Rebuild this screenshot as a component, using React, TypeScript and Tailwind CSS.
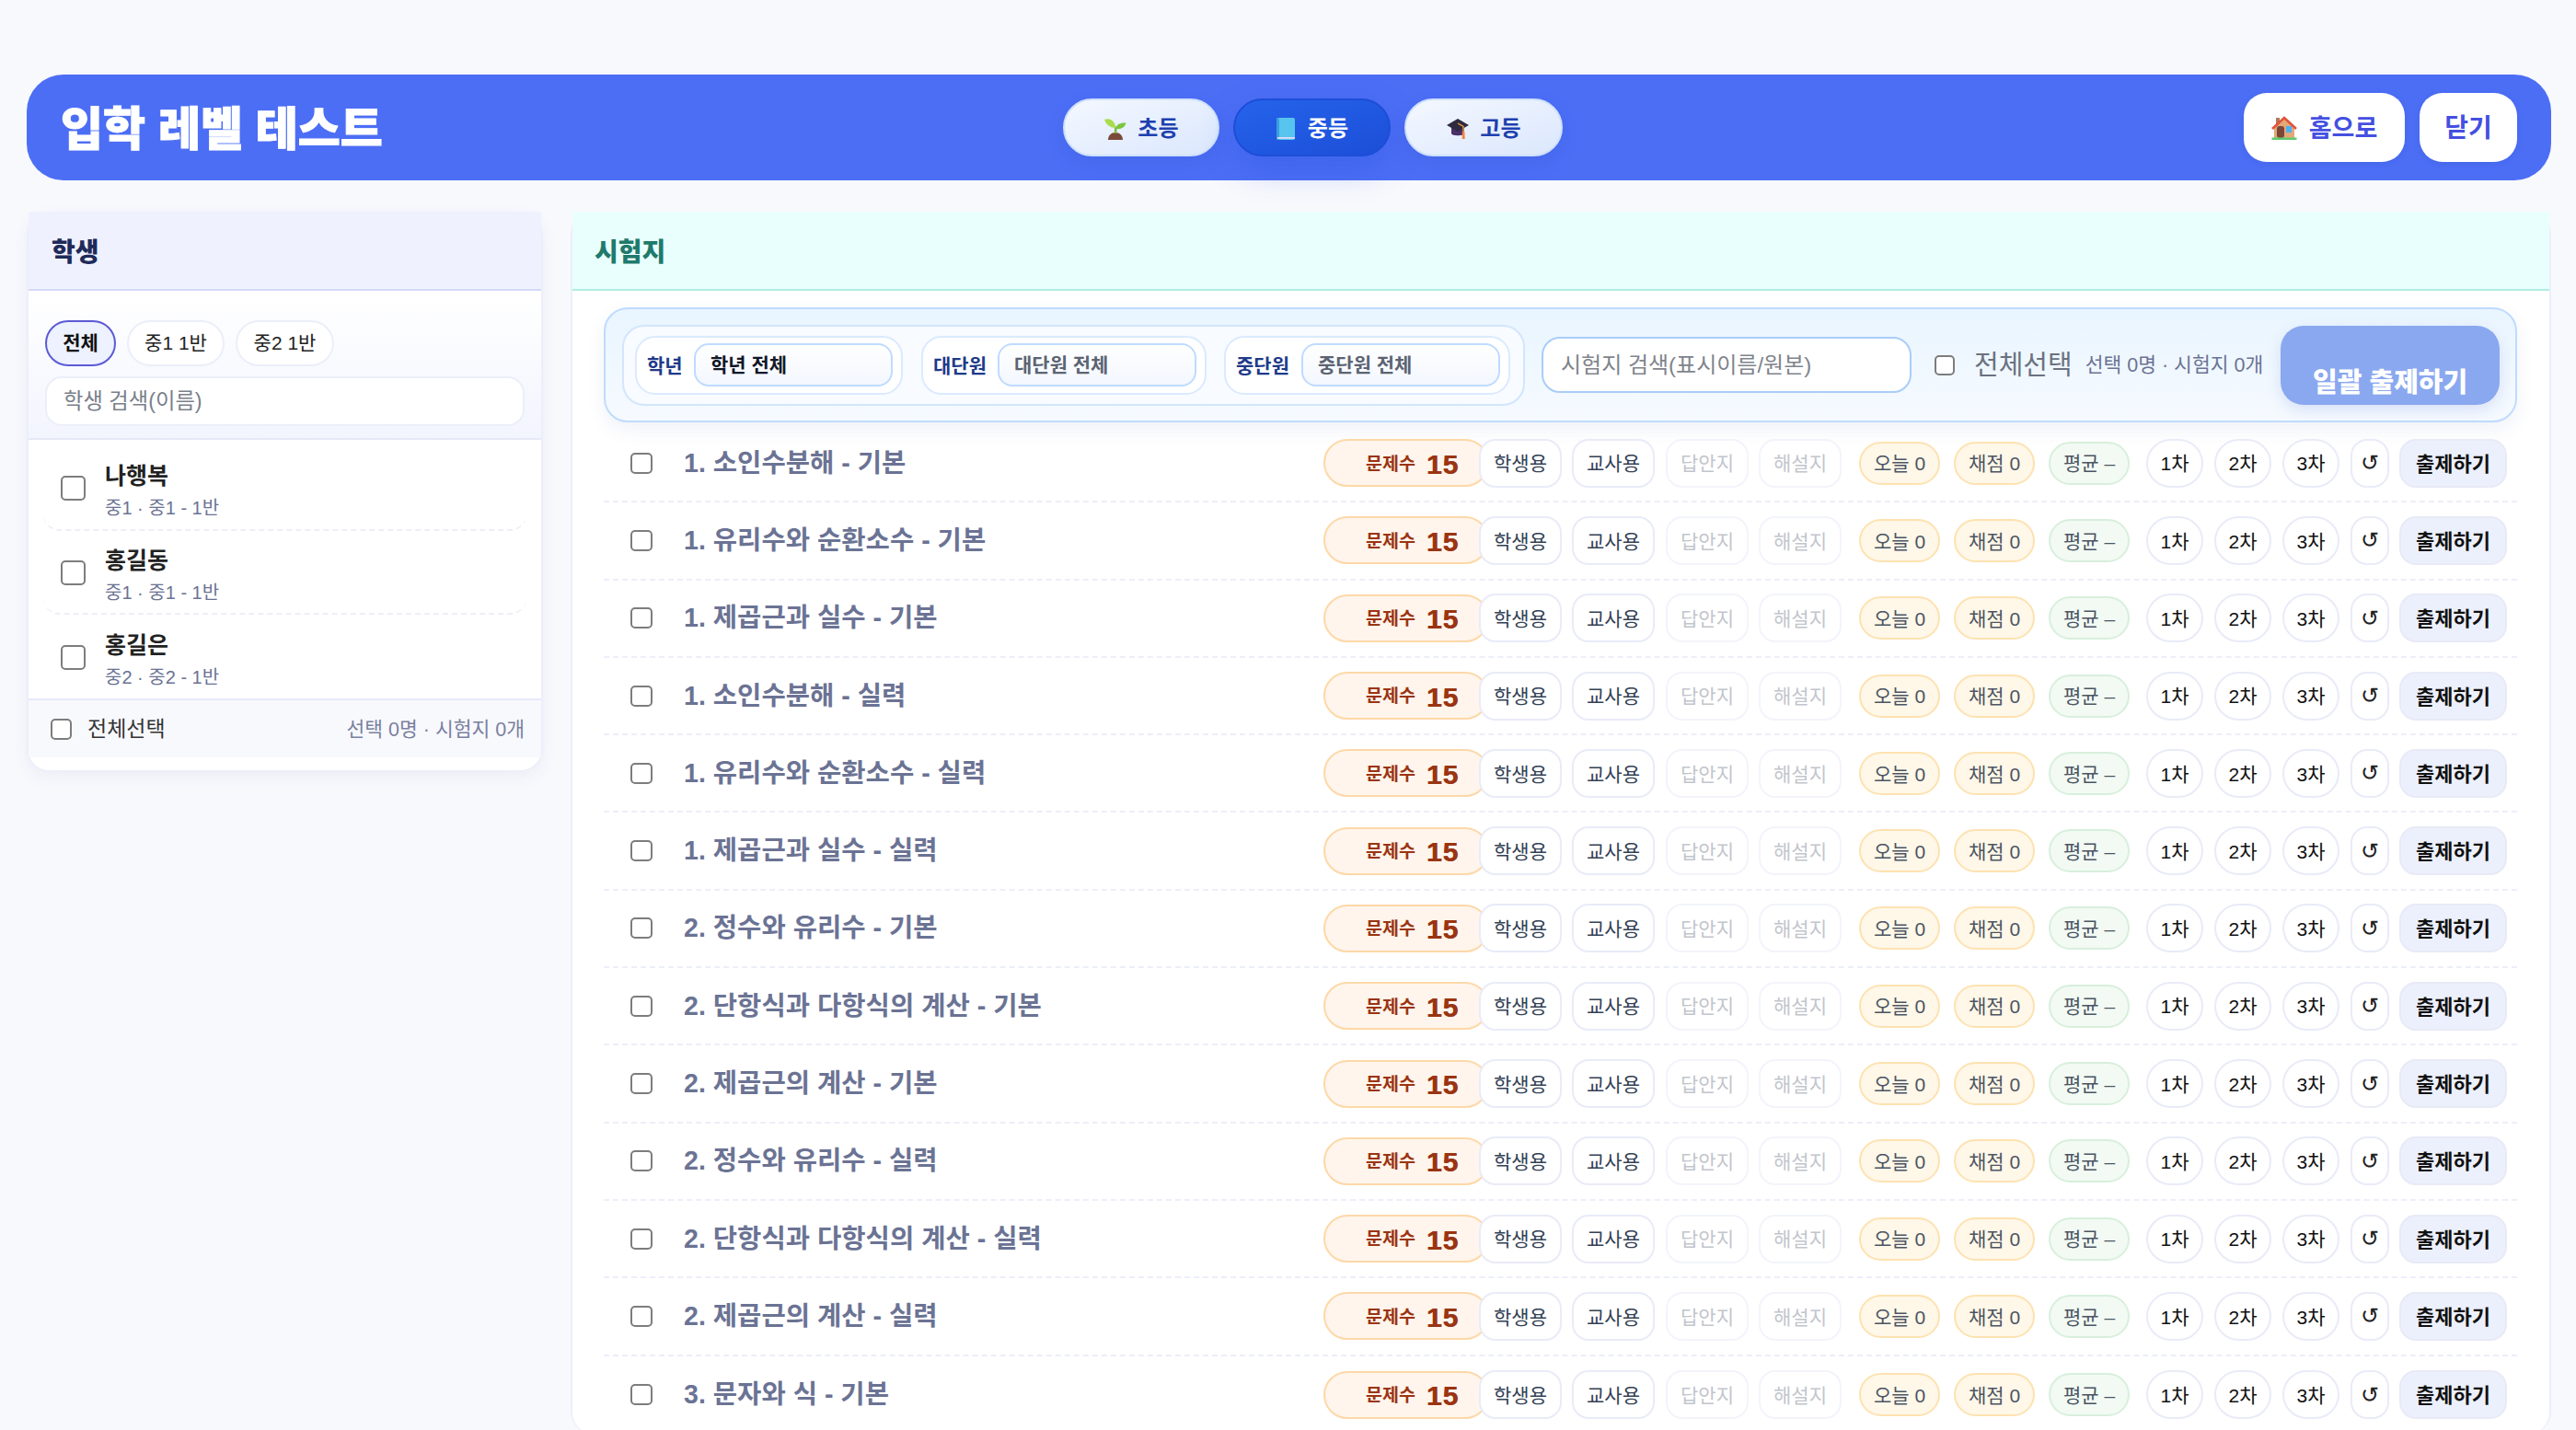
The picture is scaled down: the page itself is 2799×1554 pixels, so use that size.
import React from "react";

const F = "font-['Liberation_Sans','Noto_Sans_CJK_KR',sans-serif]";

const Sprout = () => (
  <svg viewBox="0 0 24 24" className="w-[24px] h-[24px] mt-[2px]">
    <path d="M4 24c0-5 3.500-8 8-8s8 3 8 8z" fill="#7a4a3a" />
    <path d="M11 17V9.500h2.400V17z" fill="#74b843" />
    <path d="M12 11C7 11 2 8 0 2c5-2 11 0 12.500 9z" fill="#a9dc4c" />
    <path d="M12.500 12c0-5 5-7 11-6.500-1 5-6 7.500-11 6.500z" fill="#7cc63e" />
  </svg>
);
const Book = () => (
  <svg viewBox="0 0 20 24" className="w-[20px] h-[24px] mt-[2px]">
    <rect x="0" y="0" width="20" height="24" rx="2" fill="#56c4ef" />
    <rect x="0" y="0" width="3" height="24" rx="1.500" fill="#3aa0dd" />
    <rect x="1" y="21" width="19" height="1.800" fill="#e3d9f5" />
  </svg>
);
const Cap = () => (
  <svg viewBox="0 0 24 22" className="w-[24px] h-[22px] mt-[3px]">
    <path d="M5 9v7c0 3 14 3 14 0V9z" fill="#4a2f6b" />
    <path d="M12 0l12 7-12 7L0 7z" fill="#2f2a3f" />
    <path d="M12 5l6 3.500V16" stroke="#e8a33d" strokeWidth="1.400" fill="none" />
    <path d="M16.800 14h2.600l.3 8h-3z" fill="#f2843c" />
  </svg>
);
const House = () => (
  <svg viewBox="0 0 28 26" className="w-[28px] h-[26px]">
    <rect x="5" y="2" width="4" height="9" fill="#b07a55" />
    <path d="M3 13L14 3l11 10v11H3z" fill="#e2a877" />
    <rect x="6" y="11" width="8" height="13" rx="3" fill="#7a4638" />
    <rect x="16" y="11" width="6" height="7" fill="#4fb0f0" />
    <path d="M1 14L14 2l13 12" stroke="#e0533a" strokeWidth="2.600" fill="none" />
    <rect x="0.500" y="23.500" width="27" height="2.500" fill="#5ecb6f" />
  </svg>
);

const titles = [
  "1. 소인수분해 - 기본",
  "1. 유리수와 순환소수 - 기본",
  "1. 제곱근과 실수 - 기본",
  "1. 소인수분해 - 실력",
  "1. 유리수와 순환소수 - 실력",
  "1. 제곱근과 실수 - 실력",
  "2. 정수와 유리수 - 기본",
  "2. 단항식과 다항식의 계산 - 기본",
  "2. 제곱근의 계산 - 기본",
  "2. 정수와 유리수 - 실력",
  "2. 단항식과 다항식의 계산 - 실력",
  "2. 제곱근의 계산 - 실력",
  "3. 문자와 식 - 기본",
];

const students = [
  { n: "나행복", s: "중1 · 중1 - 1반", h: "h-[99px] pt-[8px]" },
  { n: "홍길동", s: "중1 · 중1 - 1반", h: "h-[91px] pt-[2px]" },
  { n: "홍길은", s: "중2 · 중2 - 1반", h: "h-[91px] pt-[2px]" },
];

const Box = ({ className = "" }: { className?: string }) => (
  <span className={`block shrink-0 bg-white border-2 border-[#7d7d7d] rounded-[5px] ${className}`} />
);

const ghost = "flex items-center justify-center h-[53px] pt-[2px] bg-white border-2 border-[#e9ebf8] text-[21px]";
const stat = "w-[88px] h-[47px] pt-[2px] rounded-full border-2 flex items-center justify-center text-[21px] text-[#4b5563]";

function Row({ t, i }: { t: string; i: number }) {
  return (
    <div className={`h-[84.3px] flex items-center pl-[29px] pr-[11px] ${i < 12 ? "border-b-2 border-dashed border-[#eceef9]" : ""}`}>
      <Box className="w-[24px] h-[23px]" />
      <div className="flex-1 ml-[34px] text-[28.6px] font-bold text-[#6b7394] whitespace-nowrap">{t}</div>
      <div className="w-[180px] h-[52px] pt-[2px] mr-[-11px] rounded-full bg-[#fff5ec] border-2 border-[#fdd8a8] flex items-center pl-[44px] text-[#9a3412] font-bold">
        <span className="text-[19.5px]">문제수</span>
        <span className="text-[30px] ml-[12px] tracking-[1px] [text-shadow:0.6px_0_0_#9a3412]">15</span>
      </div>
      <div className={`relative ${ghost} w-[90px] rounded-[18px] text-[#334155]`}>학생용</div>
      <div className={`${ghost} w-[90px] rounded-[18px] ml-[11px] text-[#334155]`}>교사용</div>
      <div className={`${ghost} w-[90px] rounded-[18px] ml-[12px] text-[#c2c5cc] !border-[#f3f4fb]`}>답안지</div>
      <div className={`${ghost} w-[90px] rounded-[18px] ml-[11px] text-[#c2c5cc] !border-[#f3f4fb]`}>해설지</div>
      <div className={`${stat} ml-[19px] bg-[#fff7e8] border-[#fde2b0]`}>오늘 0</div>
      <div className={`${stat} ml-[15px] bg-[#fff7e8] border-[#fde2b0]`}>채점 0</div>
      <div className={`${stat} ml-[15px] bg-[#f2faf3] border-[#d8efdc]`}>평균 –</div>
      <div className={`${ghost} ml-[18px] w-[62px] rounded-full text-[#111]`}>1차</div>
      <div className={`${ghost} ml-[12px] w-[62px] rounded-full text-[#111]`}>2차</div>
      <div className={`${ghost} ml-[12px] w-[62px] rounded-full text-[#111]`}>3차</div>
      <div className={`${ghost} ml-[12px] w-[42px] rounded-[18px] text-[#222] !text-[24px] !pt-0`}>↺</div>
      <div className="ml-[11px] w-[117px] h-[53px] pt-[2px] rounded-[18px] bg-[#ecf0fd] border-2 border-[#e8eaf6] flex items-center justify-center text-[22px] font-bold text-[#111]">출제하기</div>
    </div>
  );
}

function Filter({ label, value, dark, ml, w }: { label: string; value: string; dark?: boolean; ml?: string; w: string }) {
  return (
    <div className={`${w} ${ml ?? ""} h-[64px] bg-white border-2 border-[#dbeafe] rounded-[22px] flex items-center pl-[11px] pr-[9px]`}>
      <span className="flex-1 mt-[3px] text-[21px] font-bold text-[#1e3a8a] whitespace-nowrap">{label}</span>
      <div className={`w-[216px] h-[47px] rounded-[16px] border-2 border-[#bfdbfe] bg-gradient-to-b from-white to-[#f3f7ff] flex items-center pl-[16px] text-[21px] font-bold ${dark ? "text-[#111827]" : "text-[#5b6472]"}`}>{value}</div>
    </div>
  );
}

export default function App() {
  return (
    <div className={`${F} h-screen overflow-hidden bg-[#f8f9fd] pl-[29px] pr-[27px] pt-[81px]`}>
      <header className="h-[115px] rounded-[40px] bg-[#4c6ef5] flex items-center justify-between pl-[37px] pr-[37px]">
        <h1 className="mt-[4px] text-[50px] font-black text-white whitespace-nowrap leading-none [-webkit-text-stroke:1px_white]">입학 레벨 테스트</h1>
        <nav className="flex gap-[15px]">
          <button className="w-[170px] h-[63px] rounded-full bg-gradient-to-br from-[#f4f8ff] to-[#dbe7fd] border-2 border-[#cfe0fb] shadow-[0_8px_20px_rgba(30,64,175,0.12)] flex items-center justify-center gap-[12px] text-[24px] font-bold text-[#1e40af]"><Sprout /><span className="mt-[3px]">초등</span></button>
          <button className="w-[171px] h-[63px] rounded-full bg-gradient-to-br from-[#2563eb] to-[#1d4ed8] border-2 border-[#1d4ed8] shadow-[0_14px_36px_rgba(29,78,216,0.28)] flex items-center justify-center gap-[14px] text-[24px] font-bold text-white"><Book /><span className="mt-[3px]">중등</span></button>
          <button className="w-[172px] h-[63px] rounded-full bg-gradient-to-br from-[#f4f8ff] to-[#dbe7fd] border-2 border-[#cfe0fb] shadow-[0_8px_20px_rgba(30,64,175,0.12)] flex items-center justify-center gap-[12px] text-[24px] font-bold text-[#1e40af]"><Cap /><span className="mt-[3px]">고등</span></button>
        </nav>
        <div className="flex gap-[16px]">
          <button className="w-[175px] h-[75px] rounded-[25px] bg-white flex items-center justify-center gap-[13px] text-[27px] font-bold text-[#4450e0] shadow-[0_2px_6px_rgba(30,64,175,0.15)]"><House /><span className="mt-[3px]">홈으로</span></button>
          <button className="w-[106px] h-[75px] rounded-[25px] bg-white flex items-center justify-center text-[28px] font-bold text-[#4450e0] shadow-[0_2px_6px_rgba(30,64,175,0.15)]"><span className="mt-[3px]">닫기</span></button>
        </div>
      </header>

      <main className="flex gap-[30px] mt-[34px] items-start">
        <aside className="w-[561px] shrink-0 bg-white rounded-[24px] border-2 border-[#eceffa] pb-[14px] shadow-[0_6px_18px_rgba(60,70,140,0.06)]">
          <div className="h-[86px] bg-[#eff2fe] border-b-2 border-[#d3d8f6] flex items-center pl-[25px] pt-[5px] text-[28px] font-black text-[#1e2a5a] mt-[-2px]">학생</div>
          <div className="h-[162px] pt-[32px] px-[18px] bg-gradient-to-b from-white to-[#f3f5fe] border-b-2 border-[#e6e9f8]">
            <div className="flex gap-[12px]">
              <span className="w-[77px] h-[50px] rounded-full bg-[#eef1fe] border-2 border-[#5b5bd6] flex items-center justify-center text-[21px] font-bold text-[#111]">전체</span>
              <span className="w-[106px] h-[50px] rounded-full bg-white border-2 border-[#eceef9] flex items-center justify-center text-[21px] text-[#222]">중1 1반</span>
              <span className="w-[107px] h-[50px] rounded-full bg-white border-2 border-[#eceef9] flex items-center justify-center text-[21px] text-[#222]">중2 1반</span>
            </div>
            <div className="mt-[11px] h-[54px] rounded-[18px] bg-white border-2 border-[#eceef9] flex items-center pl-[18px] text-[23.3px] text-[#7a7f8a]">학생 검색(이름)</div>
          </div>
          {students.map((s, i) => (
            <div key={s.n} className={`${s.h} flex items-center mx-[16px] pl-[19px] ${i < 2 ? "border-b-2 border-dashed border-[#eceef9] rounded-b-[18px]" : ""}`}>
              <Box className="w-[27px] h-[27px]" />
              <div className="ml-[21px] mt-[5px]">
                <div className="text-[25px] font-bold text-[#222] leading-[34px]">{s.n}</div>
                <div className="text-[20px] text-[#6b7394] leading-[30px] mt-[3px]">{s.s}</div>
              </div>
            </div>
          ))}
          <div className="h-[64px] bg-[#f8f9fd] border-t-2 border-[#e6e9f8] flex items-center pl-[24px] pr-[18px]">
            <Box className="w-[23px] h-[23px]" />
            <span className="ml-[17px] text-[23px] text-[#333]">전체선택</span>
            <span className="ml-auto mt-[2px] text-[21.5px] text-[#7a80a0]">선택 0명 · 시험지 0개</span>
          </div>
        </aside>

        <section className="flex-1 min-w-0 bg-white rounded-[24px] border-x-2 border-t-2 border-[#eceffa]">
          <div className="h-[86px] bg-[#e9fffe] border-b-2 border-[#aeeee0] flex items-center pl-[24px] pt-[5px] text-[28px] font-black text-[#1f7a6b] mt-[-2px]">시험지</div>
          <div className="pl-[34px] pt-[18px]">
            <div className="h-[125px] w-[2079px] rounded-[26px] border-2 border-[#bfdbfe] bg-gradient-to-b from-[#e9f5ff] to-[#f6faff] shadow-[0_8px_20px_rgba(60,90,160,0.08)] flex items-center pl-[18px]">
              <div className="w-[981px] h-[88px] rounded-[24px] border-2 border-[#d3e5fd] bg-[#f8fbff] flex items-center pl-[12px] shrink-0">
                <Filter label="학년" value="학년 전체" dark w="w-[291px]" />
                <Filter label="대단원" value="대단원 전체" ml="ml-[20px]" w="w-[310px]" />
                <Filter label="중단원" value="중단원 전체" ml="ml-[19px]" w="w-[311px]" />
              </div>
              <div className="ml-[18px] w-[402px] h-[61px] rounded-[20px] bg-white border-2 border-[#a9cdf8] flex items-center pl-[19px] text-[24px] text-[#7f848c] shrink-0">시험지 검색(표시이름/원본)</div>
              <Box className="ml-[25px] w-[22px] h-[22px]" />
              <span className="ml-[21px] mt-[2px] text-[29px] text-[#6b7280] whitespace-nowrap">전체선택</span>
              <span className="ml-[14px] mt-[2px] text-[21.5px] text-[#6b7394] whitespace-nowrap">선택 0명 · 시험지 0개</span>
              <div className="ml-[19px] mt-[1px] w-[238px] h-[86px] shrink-0 rounded-[25px] bg-[#8aa8ef] shadow-[0_6px_16px_rgba(60,90,200,0.15)] flex items-end justify-center pb-[2px] text-[29px] font-black text-white">일괄 출제하기</div>
            </div>
            <div className="w-[2079px] mt-[3px]">
              {titles.map((t, i) => (
                <Row key={t} t={t} i={i} />
              ))}
            </div>
          </div>
        </section>
      </main>
    </div>
  );
}
